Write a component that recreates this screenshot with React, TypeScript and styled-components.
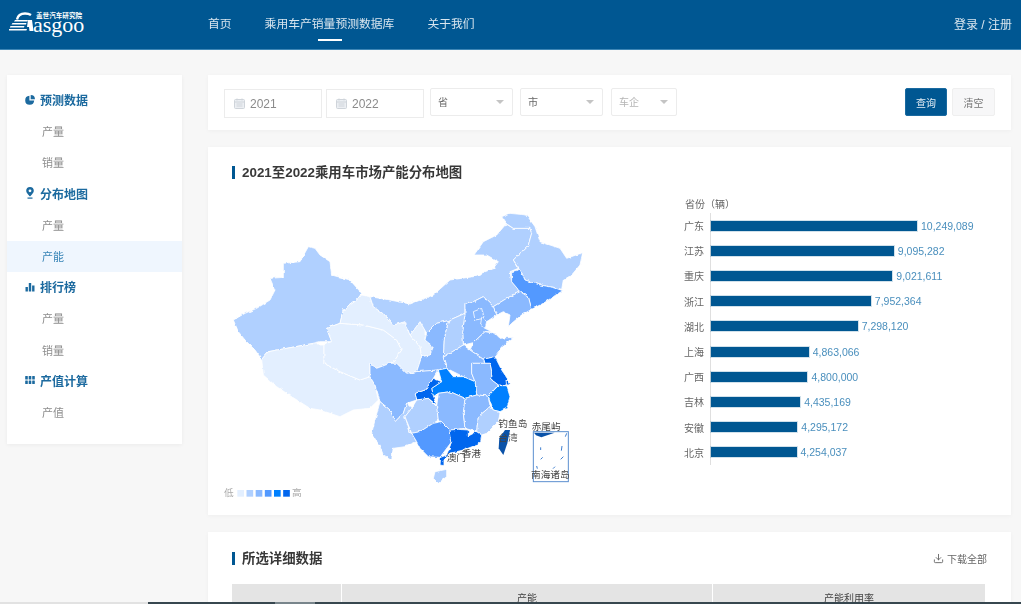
import React from "react";
import styled, { createGlobalStyle } from "styled-components";
import { Download } from "lucide-react";

const blue = "#005792";
const FONT = `"Liberation Sans", "Noto Sans CJK SC", sans-serif`;

const GlobalStyle = createGlobalStyle`
  html, body {
    margin: 0;
    height: 604px;
    overflow: hidden;
    background: #f7f7f7;
    font-family: ${FONT};
  }
  * { box-sizing: border-box; }
`;

const Page = styled.div`
  width: 1021px;
  height: 604px;
  overflow: hidden;
  position: relative;
  filter: blur(0.45px);
`;

const Header = styled.header`
  height: 50px;
  background: ${blue};
  border-bottom: 1px solid #3d86b6;
  display: flex;
  align-items: center;
  padding: 0 9px;
  color: #d9e6ef;
`;

const Logo = styled.div`
  width: 77px;
  height: 28px;
  margin-top: -2px;
  margin-right: 122px;
  flex: none;
`;

const Nav = styled.nav`
  display: flex;
  gap: 33px;
  flex: 1;
  height: 100%;
`;

const NavItem = styled.a<{ $active?: boolean }>`
  position: relative;
  font-size: 11.8px;
  line-height: 49px;
  color: #d9e6ef;

  ${(p) =>
    p.$active &&
    `&::after {
      content: "";
      position: absolute;
      left: 50%;
      margin-left: -12px;
      bottom: 8px;
      width: 24px;
      height: 2px;
      background: #fff;
    }`}
`;

const Login = styled.a`
  font-size: 12px;
  margin-top: -2px;
  color: #d9e6ef;
`;

const Body = styled.div`
  display: flex;
  align-items: flex-start;
  gap: 26px;
  padding: 25px 0 0 7px;
`;

const Sidebar = styled.aside`
  width: 175px;
  flex: none;
  background: #fff;
  box-shadow: 0 1px 4px rgba(0, 0, 0, 0.05);
  padding: 10px 0 16px;
`;

const GroupTitle = styled.div`
  height: 31.2px;
  display: flex;
  align-items: center;
  gap: 5px;
  padding: 0 0 2px 18px;
  font-size: 12px;
  font-weight: 700;
  color: #1c6a9f;
`;

const SideItem = styled.div<{ $active?: boolean }>`
  height: 31.2px;
  line-height: 32.4px;
  padding-left: 35px;
  font-size: 11px;
  color: ${(p) => (p.$active ? "#3a86b8" : "#8d8d8d")};
  background: ${(p) => (p.$active ? "#eff6fe" : "transparent")};
`;

const Main = styled.main`
  width: 803px;
  flex: none;
  display: flex;
  flex-direction: column;
  gap: 17px;
`;

const Card = styled.section`
  background: #fff;
  box-shadow: 0 1px 4px rgba(0, 0, 0, 0.04);
`;

const FilterCard = styled(Card)`
  height: 55px;
  display: flex;
  align-items: center;
  padding: 0 16px;
`;

const DateBox = styled.div`
  width: 98px;
  height: 29px;
  margin-right: 4px;
  margin-top: 1px;
  border: 1px solid #ececec;
  display: flex;
  align-items: center;
  gap: 5px;
  padding: 1px 0 0 9px;
  font-size: 12px;
  color: #8b8b8b;
  background: #fff;
`;

const SelectBox = styled.div<{ $w: number; $ml: number; $muted?: boolean }>`
  width: ${(p) => p.$w}px;
  height: 28px;
  margin-left: ${(p) => p.$ml}px;
  margin-top: -1px;
  border: 1px solid #ececec;
  border-radius: 2px;
  display: flex;
  align-items: center;
  justify-content: space-between;
  padding: 0 8px 2px 7px;
  font-size: 10px;
  color: ${(p) => (p.$muted ? "#b5b5b5" : "#666")};

  &::after {
    content: "";
    margin-top: 2px;
    border-left: 4px solid transparent;
    border-right: 4px solid transparent;
    border-top: 4px solid #c4c4c4;
  }
`;

const Spacer = styled.div`
  flex: 1;
`;

const QueryButton = styled.button`
  width: 42px;
  height: 28px;
  margin-top: -1px;
  border: 1px solid #1a6aa0;
  border-radius: 2px;
  background: ${blue};
  color: #e4eef5;
  font: 10px ${FONT};
  padding: 0;
`;

const ClearButton = styled.button`
  width: 43px;
  height: 28px;
  margin-top: -1px;
  margin-left: 5px;
  border: 1px solid #efefef;
  border-radius: 2px;
  background: #f7f7f8;
  color: #777;
  font: 10px ${FONT};
  padding: 0;
`;

const MapCard = styled(Card)`
  height: 368px;
  padding: 17px 24px 0;
`;

const Title = styled.h2`
  margin: 0;
  font-size: 13.4px;
  line-height: 17px;
  font-weight: 700;
  color: #383838;
  display: flex;
  align-items: center;
  gap: 7px;

  &::before {
    content: "";
    width: 3px;
    height: 13px;
    background: ${blue};
  }
`;

const ChartRow = styled.div`
  display: flex;
`;

const MapWrap = styled.div`
  width: 380px;
  flex: none;
  margin-left: -12px;
  margin-top: 19px;
`;

const MapSvg = styled.svg`
  display: block;
  width: 380px;
  height: 300px;
`;

const BarsWrap = styled.div`
  margin-left: 84px;
  margin-top: 17px;
  width: 320px;
`;

const BarsHead = styled.div`
  font-size: 10px;
  line-height: 14px;
  color: #666;
  padding-left: 1px;
  margin-bottom: 1px;
`;

const BarList = styled.div`
  display: flex;
  flex-direction: column;
`;

const BarRow = styled.div`
  height: 25.2px;
  display: flex;
  align-items: center;
`;

const BarName = styled.div`
  width: 26px;
  flex: none;
  font-size: 10px;
  color: #666;
`;

const BarTrack = styled.div`
  flex: 1;
  height: 100%;
  border-left: 1px solid #dfdfdf;
  display: flex;
  align-items: center;
  gap: 4px;
`;

const Bar = styled.div`
  height: 10px;
  background: ${blue};
  box-shadow: 0 0 0 1px rgba(0, 87, 146, 0.18);
`;

const BarValue = styled.span`
  font-size: 10.5px;
  color: #4a8fbd;
`;

const DetailCard = styled(Card)`
  height: 120px;
  padding: 18px 24px 0;
`;

const DetailHead = styled.div`
  display: flex;
  align-items: center;
  justify-content: space-between;
  height: 17px;
`;

const DownloadLink = styled.a`
  display: flex;
  align-items: center;
  gap: 3px;
  font-size: 10px;
  color: #666;
`;

const TableHead = styled.div`
  display: grid;
  grid-template-columns: 109px 370px 272px;
  gap: 1px;
  margin-top: 17px;
  height: 40px;
`;

const HeadCell = styled.div`
  background: #e4e4e4;
  font-size: 10px;
  line-height: 14px;
  padding-top: 8px;
  text-align: center;
  color: #444;
`;

const BottomEdge = styled.div`
  position: absolute;
  left: 148px;
  right: 0;
  bottom: 0;
  height: 2px;
  background: #37474f;

  &::before {
    content: "";
    position: absolute;
    left: -148px;
    width: 148px;
    top: 0;
    height: 2px;
    background: #e2e2e2;
  }

  &::after {
    content: "";
    position: absolute;
    left: 127px;
    width: 40px;
    top: 0;
    height: 2px;
    background: #78858b;
  }
`;

const provinces: { fill: string; points: string }[] = [
  // 新疆
  { fill: "#b0d0ff", points: "40,360 75,340 110,325 150,300 165,270 150,235 190,232 190,190 240,185 265,140 285,145 300,165 330,185 335,225 390,240 425,280 410,300 370,330 360,370 320,385 335,425 300,425 270,432 200,445 145,455 125,478 105,450 75,420 55,395" },
  // 西藏
  { fill: "#e3efff", points: "125,478 145,455 200,445 270,432 312,432 312,490 360,515 420,540 450,530 465,555 475,600 450,625 400,630 360,650 300,630 270,625 215,590 170,560 130,525" },
  // 青海
  { fill: "#e3efff", points: "320,385 360,370 430,375 490,390 530,420 545,450 525,480 510,490 470,505 450,490 450,530 420,540 360,515 312,490 312,432 335,425" },
  // 甘肃
  { fill: "#e3efff", points: "425,285 450,290 460,320 495,345 520,375 555,365 570,405 600,440 605,470 590,515 560,520 530,490 510,490 525,480 545,450 530,420 490,390 430,375 360,370 370,330 410,300" },
  // 宁夏
  { fill: "#e3efff", points: "570,405 600,365 615,390 615,420 640,440 630,465 605,470 600,440" },
  // 内蒙古
  { fill: "#b0d0ff", points: "450,290 510,300 570,312 640,285 690,240 760,230 820,205 835,185 800,165 762,165 790,125 830,105 858,72 880,85 930,85 935,100 925,135 880,180 895,205 870,215 875,245 900,275 860,295 820,320 805,305 790,290 760,305 735,310 735,340 685,362 650,370 620,400 600,365 570,405 555,365 520,375 495,345 460,320" },
  // 黑龙江
  { fill: "#b0d0ff", points: "845,50 870,40 920,45 945,80 960,125 1020,145 1040,175 1088,158 1080,195 1055,225 1030,240 1025,268 1000,262 960,255 915,240 900,208 880,180 925,135 935,100 930,85 880,85 858,70" },
  // 吉林
  { fill: "#5299ff", points: "875,215 900,208 915,240 960,255 1000,262 1028,272 1000,290 970,310 935,328 925,290 900,275 875,245" },
  // 辽宁
  { fill: "#8ab9ff", points: "820,320 860,295 900,275 925,290 935,328 905,345 875,370 865,380 870,345 850,335 830,345" },
  // 河北
  { fill: "#8ab9ff", points: "735,310 760,305 790,290 805,305 820,320 830,345 800,365 795,385 815,395 795,395 760,428 730,435 728,395 735,340" },
  // 北京
  { fill: "#8ab9ff", points: "760,335 785,325 792,355 765,360" },
  // 天津
  { fill: "#8ab9ff", points: "785,352 800,365 795,385 782,372" },
  // 山西
  { fill: "#b0d0ff", points: "735,340 728,395 730,435 670,472 672,420 685,362" },
  // 陕西
  { fill: "#8ab9ff", points: "685,362 672,420 670,472 680,505 655,510 600,515 590,515 605,470 630,465 640,440 615,420 620,400 650,370" },
  // 山东
  { fill: "#8ab9ff", points: "760,428 795,395 825,400 840,415 880,412 845,440 825,470 790,478 750,450" },
  // 河南
  { fill: "#8ab9ff", points: "730,435 750,450 790,478 795,490 755,490 755,520 765,545 730,530 680,505 670,472" },
  // 江苏
  { fill: "#0066ee", points: "790,478 825,470 845,510 865,540 860,555 835,555 815,540 815,515 810,490 795,490" },
  // 安徽
  { fill: "#8ab9ff", points: "755,490 795,490 810,490 815,515 815,540 835,555 805,588 770,585 765,545 755,520" },
  // 上海
  { fill: "#0066ee", points: "858,540 868,550 860,557" },
  // 浙江
  { fill: "#0080ff", points: "835,557 860,557 870,590 860,625 840,635 820,630 805,588" },
  // 湖北
  { fill: "#0080ff", points: "655,510 680,505 700,530 730,530 765,545 770,585 735,595 690,575 655,580 640,590 635,565 665,545" },
  // 重庆
  { fill: "#0066ee", points: "640,535 665,545 635,565 640,590 650,615 625,595 590,600 585,580 615,570" },
  // 四川
  { fill: "#8ab9ff", points: "450,490 470,505 510,490 530,490 560,520 590,515 655,510 640,535 615,570 585,580 590,600 560,610 550,640 525,665 510,630 480,605 465,555 450,530" },
  // 云南
  { fill: "#b0d0ff", points: "480,605 510,630 525,665 550,640 560,610 575,625 555,650 570,695 580,710 590,725 555,740 520,745 515,778 490,765 480,740 455,700 465,660" },
  // 贵州
  { fill: "#b0d0ff", points: "590,600 625,595 650,620 655,660 640,670 600,695 575,700 555,650 575,625" },
  // 湖南
  { fill: "#8ab9ff", points: "655,580 690,575 735,595 730,640 735,685 690,690 665,665 655,660 650,620" },
  // 江西
  { fill: "#8ab9ff", points: "735,595 770,585 805,588 810,620 775,650 770,695 735,685 730,640" },
  // 福建
  { fill: "#b0d0ff", points: "810,620 820,630 840,635 835,665 800,700 785,705 770,695 775,650" },
  // 广西
  { fill: "#5299ff", points: "575,700 600,695 640,670 665,665 690,690 695,725 660,772 625,770 600,745 590,725" },
  // 广东
  { fill: "#0066ee", points: "690,690 715,688 745,690 745,708 770,695 785,705 782,725 770,735 730,750 690,760 672,780 672,797 660,795 662,772 680,765 695,725" },
  // 海南
  { fill: "#b0d0ff", points: "645,815 680,808 680,830 655,850 640,835" },
];

const legend = ["#e3efff", "#b0d0ff", "#8ab9ff", "#5299ff", "#0080ff", "#0066ee"];

const mapLabels = [
  { text: "钓鱼岛", x: 835, y: 680 },
  { text: "台湾", x: 835, y: 724 },
  { text: "赤尾屿", x: 935, y: 690 },
  { text: "香港", x: 725, y: 772 },
  { text: "澳门", x: 680, y: 782 },
  { text: "南海诸岛", x: 933, y: 833 },
];

const bars = [
  { name: "广东", value: 10249089 },
  { name: "江苏", value: 9095282 },
  { name: "重庆", value: 9021611 },
  { name: "浙江", value: 7952364 },
  { name: "湖北", value: 7298120 },
  { name: "上海", value: 4863066 },
  { name: "广西", value: 4800000 },
  { name: "吉林", value: 4435169 },
  { name: "安徽", value: 4295172 },
  { name: "北京", value: 4254037 },
];

const LogoMark = () => (
  <Logo>
    <svg width="77" height="28" viewBox="0 0 77 28">
      <path d="M8 9.5C9 5 13 3.500 16 3.500c2.500 0 4.500.6 6 1.600" fill="none" stroke="#fff" strokeWidth="2.4" />
      <path d="M6 10h13l-.6 1.600H5zM3.500 13h14l-.6 1.600H2.500zM1.500 16h14l-.6 1.600H.8zM0 19h18l-.6 1.600H0z" fill="#fff" />
      <path d="M19 10h4l1.500 11h-4l-.5-4h-2z" fill="#fff" />
      <text x="24" y="21.500" fontFamily="Liberation Serif, serif" fontSize="22" fill="#fff">
        asgoo
      </text>
      <text x="27" y="8" fontFamily="Noto Sans CJK SC, sans-serif" fontWeight="700" fontSize="6.600" fill="#fff">
        盖世汽车研究院
      </text>
    </svg>
  </Logo>
);

const PieIcon = () => (
  <svg width="10" height="10" viewBox="0 0 10 10" fill="#1c6a9f">
    <path d="M4.400.8v4.800h4.800A4.500 4.500 0 1 1 4.400.8z" />
    <path d="M5.700 0A4.400 4.400 0 0 1 10 4.300H5.700z" />
  </svg>
);

const PinIcon = () => (
  <svg width="10" height="12" viewBox="0 0 10 12" fill="#1c6a9f">
    <path d="M5 0a3.800 3.800 0 0 1 3.800 3.800C8.800 6.200 5 9.500 5 9.500S1.200 6.200 1.200 3.800A3.800 3.800 0 0 1 5 0zm0 2.400a1.400 1.400 0 1 0 0 2.800 1.400 1.400 0 0 0 0-2.800z" />
    <rect x="2.500" y="10.500" width="5" height="1.200" />
  </svg>
);

const BarsIcon = () => (
  <svg width="10" height="10" viewBox="0 0 10 10" fill="#1c6a9f">
    <rect x="0.500" y="5" width="2.400" height="4.500" />
    <rect x="3.800" y="1" width="2.400" height="8.500" />
    <rect x="7.100" y="3.500" width="2.400" height="6" />
  </svg>
);

const GridIcon = () => (
  <svg width="10" height="10" viewBox="0 0 10 10" fill="#1c6a9f">
    {[0.2, 3.7, 7.2].map((x) =>
      [1, 5.4].map((y) => <rect key={`${x}-${y}`} x={x} y={y} width="2.600" height="3.600" rx="0.500" />)
    )}
  </svg>
);

const CalendarIcon = () => (
  <svg width="11" height="11" viewBox="0 0 11 11">
    <rect x="0.500" y="1.500" width="10" height="9" rx="1" fill="#eceff3" stroke="#cfd4da" />
    <path d="M.5 4h10M2.500 6h6M2.500 8h6M3 .5v2M8 .5v2" stroke="#cfd4da" fill="none" />
  </svg>
);

const ChinaMap = () => (
  <MapSvg viewBox="0 0 1140 900">
    <defs>
      <filter id="rough" x="-2%" y="-2%" width="104%" height="104%">
        <feTurbulence type="fractalNoise" baseFrequency="0.07" numOctaves="2" seed="4" result="noise" />
        <feDisplacementMap in="SourceGraphic" in2="noise" scale="9" xChannelSelector="R" yChannelSelector="G" />
      </filter>
    </defs>
    <g filter="url(#rough)">
      {provinces.map((p, i) => (
        <polygon key={i} points={p.points} fill={p.fill} stroke="#fff" strokeWidth="2.4" strokeLinejoin="round" />
      ))}
    </g>
    <polygon points="855,690 870,690 862,730 850,765 836,745 838,715" fill="#0a52a8" />
    <rect x="940" y="695" width="105" height="150" fill="#fff" stroke="#5b8fd0" strokeWidth="3" />
    <path d="M942 698h62l-40 14-16-6z" fill="#0a52a8" />
    <path d="M962 742v8M968 772l-6 6M1026 738l-2 14M1030 770l-8 8M1040 700l-4 10M1005 800l-6 6M950 798l2 8" stroke="#3f7fd0" strokeWidth="3" fill="none" />
    {mapLabels.map((l) => (
      <text key={l.text} x={l.x} y={l.y} fontSize="29" fill="#444" fontFamily="Noto Sans CJK SC, sans-serif">
        {l.text}
      </text>
    ))}
    <text x="12" y="888" fontSize="29" fill="#aaa" fontFamily="Noto Sans CJK SC, sans-serif">
      低
    </text>
    {legend.map((c, i) => (
      <rect key={c} x={52 + i * 27.5} y="870" width="20" height="20" fill={c} />
    ))}
    <text x="216" y="888" fontSize="29" fill="#aaa" fontFamily="Noto Sans CJK SC, sans-serif">
      高
    </text>
  </MapSvg>
);

const App: React.FC = () => {
  return (
    <Page>
      <GlobalStyle />
      <Header>
        <LogoMark />
        <Nav>
          <NavItem>首页</NavItem>
          <NavItem $active>乘用车产销量预测数据库</NavItem>
          <NavItem>关于我们</NavItem>
        </Nav>
        <Login>登录 / 注册</Login>
      </Header>
      <Body>
        <Sidebar>
          <GroupTitle>
            <PieIcon />
            预测数据
          </GroupTitle>
          <SideItem>产量</SideItem>
          <SideItem>销量</SideItem>
          <GroupTitle>
            <PinIcon />
            分布地图
          </GroupTitle>
          <SideItem>产量</SideItem>
          <SideItem $active>产能</SideItem>
          <GroupTitle>
            <BarsIcon />
            排行榜
          </GroupTitle>
          <SideItem>产量</SideItem>
          <SideItem>销量</SideItem>
          <GroupTitle>
            <GridIcon />
            产值计算
          </GroupTitle>
          <SideItem>产值</SideItem>
        </Sidebar>
        <Main>
          <FilterCard>
            <DateBox>
              <CalendarIcon />
              2021
            </DateBox>
            <DateBox>
              <CalendarIcon />
              2022
            </DateBox>
            <SelectBox $w={83} $ml={2}>
              省
            </SelectBox>
            <SelectBox $w={83} $ml={7}>
              市
            </SelectBox>
            <SelectBox $w={66} $ml={8} $muted>
              车企
            </SelectBox>
            <Spacer />
            <QueryButton>查询</QueryButton>
            <ClearButton>清空</ClearButton>
          </FilterCard>
          <MapCard>
            <Title>2021至2022乘用车市场产能分布地图</Title>
            <ChartRow>
              <MapWrap>
                <ChinaMap />
              </MapWrap>
              <BarsWrap>
                <BarsHead>省份（辆）</BarsHead>
                <BarList>
                  {bars.map((b) => (
                    <BarRow key={b.name}>
                      <BarName>{b.name}</BarName>
                      <BarTrack>
                        <Bar style={{ width: (b.value / 10249089) * 206 }} />
                        <BarValue>{b.value.toLocaleString("en-US")}</BarValue>
                      </BarTrack>
                    </BarRow>
                  ))}
                </BarList>
              </BarsWrap>
            </ChartRow>
          </MapCard>
          <DetailCard>
            <DetailHead>
              <Title>所选详细数据</Title>
              <DownloadLink>
                <Download size={11} />
                下载全部
              </DownloadLink>
            </DetailHead>
            <TableHead>
              <HeadCell />
              <HeadCell>产能</HeadCell>
              <HeadCell>产能利用率</HeadCell>
            </TableHead>
          </DetailCard>
        </Main>
      </Body>
      <BottomEdge />
    </Page>
  );
};

export default App;
